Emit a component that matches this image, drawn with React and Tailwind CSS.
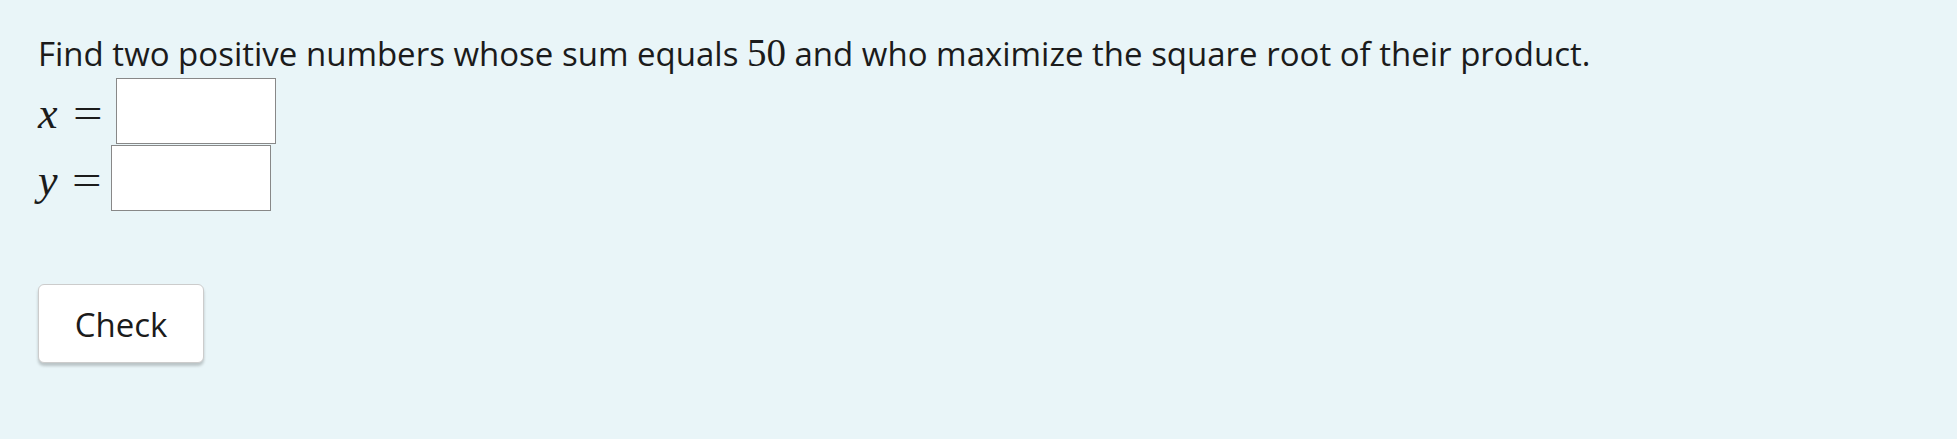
import React from 'react';

const mathFont = { fontFamily: '"Liberation Serif", "DejaVu Serif", serif' };

const AnswerRow = ({ name, labelWidth, gap }) => (
  <div className="flex items-center h-[67px]">
    <span className={`italic text-[44px] leading-none pt-[6px] ${labelWidth}`} style={mathFont}>{name}</span>
    <span className={`text-[42px] leading-none pt-[4px] w-[29px] inline-block scale-x-125 origin-left ${gap}`} style={mathFont}>=</span>
    <input type="text" className="w-[160px] h-[66px] bg-white border border-[#888] outline-none px-2 text-[28px]" />
  </div>
);

export default function App() {
  return (
    <div className="min-h-[439px] w-full bg-[#e9f5f8] text-[#1b1b1b] pl-[38px] pt-[30px]" style={{ fontFamily: '"Segoe UI", "Open Sans", sans-serif' }}>
      <p className="text-[33px] leading-[46px]">
        Find two positive numbers whose sum equals <span className="text-[39px]" style={mathFont}>50</span> and who maximize the square root of their product.
      </p>
      <div className="flex flex-col">
        <AnswerRow name="x" labelWidth="w-[35px]" gap="mr-[14px]" />
        <AnswerRow name="y" labelWidth="w-[34px]" gap="mr-[10px]" />
      </div>
      <button className="mt-[73px] w-[166px] h-[79px] bg-white border border-[#ccc] rounded-[6px] shadow-[0_3px_3px_rgba(0,0,0,0.2)] text-[33px] pt-[3px]">
        Check
      </button>
    </div>
  );
}
